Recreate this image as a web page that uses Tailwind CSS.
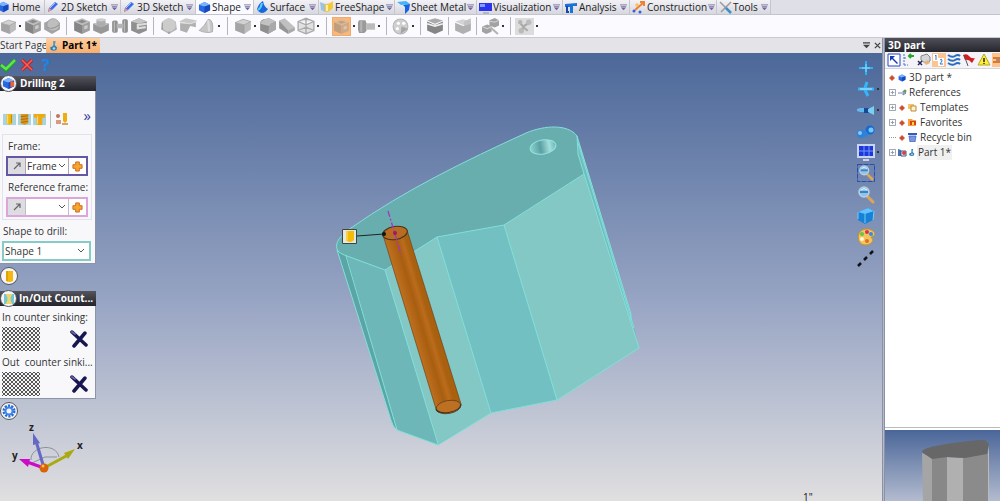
<!DOCTYPE html>
<html lang="en">
<head>
    <meta charset="UTF-8">
    <meta name="viewport" content="width=device-width, initial-scale=1.0">
    <title>Part 1 - 3D part</title>
    <script src="https://cdn.jsdelivr.net/npm/@tailwindcss/browser@4"></script>
</head>

<body class="h-screen flex flex-col overflow-hidden bg-[#e3e3e8] font-['Open_Sans',sans-serif] text-[10px] leading-[15px] text-[#333]">

<!-- Shared icon shapes -->
<svg class="absolute size-0">
    <symbol id="box" viewBox="0 0 16 16">
        <path d="M1 5 8 2 15 4 9 7z" fill="#d2d2d2"/><path d="M1 5 9 7V15L1 12z" fill="#a4a4a4"/><path d="M9 7 15 4V11L9 15z" fill="#bcbcbc"/>
        <path d="M1 5 8 2 15 4 9 7zM9 7V15" fill="none" stroke="#989898" stroke-width=".6"/>
    </symbol>
    <symbol id="dark-box" viewBox="0 0 16 16">
        <path d="M1 4 8 1 15 4 8 7z" fill="#bbb"/><path d="M1 4 8 7V15L1 12z" fill="#858585"/><path d="M8 7 15 4V12L8 15z" fill="#9e9e9e"/>
        <path d="M4 4 8 2.500 12 4 8 5.500z" fill="#8a8a8a"/><path d="M10 8 13 7V10L10 11z" fill="#ccc"/>
    </symbol>
    <symbol id="sphere" viewBox="0 0 16 16">
        <path d="M1 5 8 2 15 5V11L8 15 1 11z" fill="#a5a5a5"/><circle cx="9" cy="7" r="5.500" fill="#bebebe" stroke="#999" stroke-width=".7"/><path d="M4 9Q9 12 14 7" fill="none" stroke="#989898"/>
    </symbol>
    <symbol id="boss" viewBox="0 0 16 16">
        <path d="M1 6 8 4 15 6V12L8 15 1 12z" fill="#989898"/><path d="M1 6 8 9 15 6 8 4z" fill="#c4c4c4"/><path d="M4 2H12V8Q8 10 4 8z" fill="#adadad"/><ellipse cx="8" cy="2.500" rx="4" ry="1.500" fill="#ccc"/>
    </symbol>
    <symbol id="spool" viewBox="0 0 16 16">
        <rect x="1" y="3" width="5" height="11" rx="1.500" fill="#909090"/><rect x="10" y="2" width="5" height="12" rx="1.500" fill="#909090"/><rect x="5" y="6" width="6" height="4" fill="#b5b5b5"/><path d="M3 4V13M12 3V13" stroke="#bbb"/>
    </symbol>
    <symbol id="slot" viewBox="0 0 16 16">
        <path d="M1 4 8 1 15 4V12L8 15 1 12z" fill="#8f8f8f"/><path d="M1 4 8 1 15 4 8 6z" fill="#c5c5c5"/><path d="M15 6 7 7V10L14 9" fill="none" stroke="#ddd" stroke-width="2"/>
    </symbol>
    <symbol id="round-edge" viewBox="0 0 16 16">
        <path d="M1 6Q1 3 4 2L9 1 15 4V11L8 15 1 12z" fill="#8f8f8f"/><path d="M1 6Q2 3 5 2L9 1 15 4Q11 5 9 8z" fill="#c2c2c2"/><path d="M9 8Q11 5 15 4V11L8 15z" fill="#aaa"/>
    </symbol>
    <symbol id="round-box" viewBox="0 0 16 16">
        <path d="M2 4 8 1 14 4 15 11 8 15 1 11z" fill="#b4b4b4"/><circle cx="8" cy="7" r="6" fill="#ccc"/><path d="M8 13V15M2 5V11" stroke="#999"/>
    </symbol>
    <symbol id="sheet" viewBox="0 0 16 16">
        <path d="M0 4 6 1 16 3 10 6z" fill="#c9c9c9"/><path d="M1 5 10 6 15 4V9L10 8 7 14 1 12z" fill="#b0b0b0"/><path d="M1 5 10 6 16 4" fill="none" stroke="#ddd"/>
    </symbol>
    <symbol id="cone" viewBox="0 0 16 16">
        <path d="M1 12Q6 8 9 2Q14 2 13 13Q8 15 1 12z" fill="#c6c6c6" stroke="#a4a4a4" stroke-width=".7"/><path d="M9 3 10 13" stroke="#ddd" stroke-width="2"/>
    </symbol>
    <symbol id="wedge" viewBox="0 0 16 16">
        <path d="M1 3 6 1 15 9 9 13z" fill="#c0c0c0"/><path d="M1 3 9 12V15L1 10z" fill="#949494"/><path d="M9 12 15 9V12L9 15z" fill="#aaa"/>
    </symbol>
    <symbol id="wire" viewBox="0 0 16 16">
        <path d="M1 4 8 1 15 4V12L8 15 1 12zM1 4 8 7 15 4M8 7V15M1 12 8 9 15 12M8 1V9" fill="#e1e1e1" stroke="#aaa" stroke-width="1.200"/>
    </symbol>
    <symbol id="bolt" viewBox="0 0 16 16">
        <path d="M1 2H7L8 5V12L6 14H1L0 11V4z" fill="#9a9a9a"/><path d="M8 5H16V11H8z" fill="#bbb"/><path d="M3 3V13" stroke="#b4b4b4" stroke-width="2"/>
    </symbol>
    <symbol id="wheel" viewBox="0 0 16 16">
        <circle cx="8" cy="8" r="7" fill="#cfcfcf" stroke="#b5b5b5"/><circle cx="6" cy="5" r="1.500" fill="#fff"/><circle cx="11" cy="5" r="1.500" fill="#fff"/><circle cx="5" cy="10" r="1.500" fill="#fff"/><path d="M8 15 9 8 15 10" fill="#a5a5a5"/>
    </symbol>
    <symbol id="gauges" viewBox="0 0 16 16">
        <path d="M7 2 12 0 16 2V7L12 9 7 7zM0 8 5 6 9 8V13L4 15 0 13z" fill="#a2a2a2"/><path d="M8 9 15 15" stroke="#b4b4b4" stroke-width="2"/><path d="M0 8 5 10 9 8M7 3 12 4 16 2" stroke="#d5d5d5" fill="none"/>
    </symbol>
    <symbol id="part" viewBox="0 0 10 12">
        <path d="M4 0H7L6 5 9 8 8 11 5 12 1 11 0 8 4 6z" fill="#2f82b8"/><circle cx="5" cy="9" r="1.500" fill="#b8ddee"/><path d="M5 1V5" stroke="#86c1df"/>
    </symbol>
    <symbol id="menu" viewBox="0 0 8 8"><path d="M0 1H8M1 3H7" stroke="#7b719e"/><path d="M1 4H7L4 7z" fill="#7064a0"/></symbol>
    <symbol id="chev" viewBox="0 0 8 8"><path d="M1 2 4 5 7 2" fill="none" stroke="#555"/></symbol>
    <symbol id="dot" viewBox="0 0 6 6"><rect x="2" y="2" width="2" height="2" fill="#333"/></symbol>
    <symbol id="pencil" viewBox="0 0 12 12"><path d="M1 11 2 7 8 1 11 3 5 9z" fill="#3b6dec"/><path d="M3 7 8 2" stroke="#a8c6ff"/><path d="M1 11 2 7 5 9z" fill="#ec9286"/></symbol>
    <symbol id="bluebox" viewBox="0 0 14 14"><path d="M1 4 7 1 13 4V10L7 13 1 10z" fill="#2869e2"/><path d="M1 4 7 1 13 4 7 6z" fill="#79b5fb"/><path d="M7 6 13 4V10L7 13z" fill="#1748be"/></symbol>
    <symbol id="plus" viewBox="0 0 12 12"><path d="M4 1H8V4H11V8H8V11H4V8H1V4H4z" fill="#f7a52b" stroke="#c9661d"/></symbol>
    <symbol id="drill" viewBox="0 0 14 14"><path d="M0 1H14V13H0z" fill="#a9d4df"/><path d="M4 1H10V11L7 13 4 11z" fill="#f5b90e"/><path d="M5 2V11" stroke="#ffe36b"/><path d="M9 2V11" stroke="#c48403"/></symbol>
    <symbol id="axis" viewBox="0 0 12 12"><path d="M3 9 9 3M5 3H9V7" fill="none" stroke="#666" stroke-width="1.200"/></symbol>
    <symbol id="cross" viewBox="0 0 18 18"><path d="M2 2 16 15M15 3 4 16" stroke="#171651" stroke-width="3.500" stroke-linecap="round"/><path d="M2 2 5 4" stroke="#6466a3" stroke-width="2" stroke-linecap="round"/></symbol>
    <symbol id="gem" viewBox="0 0 8 8"><path d="M4 0 8 4 4 8 0 4z" fill="#d9593a"/><path d="M4 2V6M2 4H6" stroke="#b5482e"/></symbol>
    <symbol id="expand" viewBox="0 0 8 8"><path d="M.5.500H7.500V7.500H.5zM2 4H6M4 2V6" fill="#fff" stroke="#8e96a5"/></symbol>
    <symbol id="lens" viewBox="0 0 18 18"><path d="M10 10 16 16" stroke="#dda652" stroke-width="3" stroke-linecap="round"/><circle cx="7" cy="6" r="5" fill="#8bc4ed" stroke="#b9cfdf" stroke-width="1.500"/><path d="M3 6H11" stroke="#3f80be" stroke-width="2"/><path d="M4 4Q7 1 10 4" stroke="#e9f8ff" fill="none"/></symbol>
    <pattern id="hatch" width="4" height="4" patternUnits="userSpaceOnUse"><rect width="4" height="4" fill="#f4f4f4"/><path d="M0 0 4 4M4 0 0 4" stroke="#444" stroke-width=".9"/></pattern>
</svg>

<!-- Ribbon tabs -->
<nav class="h-[15px] shrink-0 flex bg-[#dfdfe7] text-[#222] border-b border-[#c4c4cc] whitespace-nowrap">
    <button class="w-[45px] flex items-center gap-[2px] bg-linear-to-b from-[#f2f2f6] to-[#d7d7df] border-r border-[#c6c6cf]"><svg class="w-[10px] h-3 shrink-0" viewBox="4 0 10 14"><use href="#bluebox" width="14" height="14"/></svg>Home</button>
    <button class="w-[76px] flex items-center gap-[2px] px-[2px] bg-linear-to-b from-[#f2f2f6] to-[#d7d7df] border-r border-[#c6c6cf]"><svg class="size-3 shrink-0"><use href="#pencil"/></svg>2D Sketch<svg class="size-[7px] ml-auto shrink-0"><use href="#menu"/></svg></button>
    <button class="w-[75px] flex items-center gap-[2px] px-[2px] bg-linear-to-b from-[#f2f2f6] to-[#d7d7df] border-r border-[#c6c6cf]"><svg class="size-3 shrink-0"><use href="#pencil"/></svg>3D Sketch<svg class="size-[7px] ml-auto shrink-0"><use href="#menu"/></svg></button>
    <button class="w-[58px] flex items-center gap-[1px] px-[2px] bg-[#fbfbff] border-r border-[#c6c6cf]"><svg class="size-[13px] shrink-0"><use href="#bluebox"/></svg>Shape<svg class="size-[7px] ml-auto shrink-0"><use href="#menu"/></svg></button>
    <button class="w-[65px] flex items-center gap-[2px] px-[2px] bg-linear-to-b from-[#f2f2f6] to-[#d7d7df] border-r border-[#c6c6cf]"><svg class="size-3 shrink-0" viewBox="0 0 12 12"><path d="M1 8Q3 2 7 0Q8 6 12 8Q9 12 6 12Q2 11 1 8z" fill="#1867dc"/><path d="M6 2Q5 7 2 9" stroke="#62cafa" fill="none" stroke-width="2"/></svg>Surface<svg class="size-[7px] ml-auto shrink-0"><use href="#menu"/></svg></button>
    <button class="w-[76px] flex items-center gap-[1px] px-[1px] bg-linear-to-b from-[#f2f2f6] to-[#d7d7df] border-r border-[#c6c6cf]"><svg class="size-[14px] shrink-0" viewBox="0 0 14 14"><path d="M0 2 5 4 5 12 1 10z" fill="#9bc3e1"/><path d="M5 4Q10 4 13 1V8Q9 13 5 12z" fill="#f3c83b"/><path d="M7 5V11" stroke="#fff0a6" stroke-width="2"/></svg>FreeShape<svg class="size-[7px] ml-auto shrink-0"><use href="#menu"/></svg></button>
    <button class="w-[82px] flex items-center gap-[1px] px-[2px] bg-linear-to-b from-[#f2f2f6] to-[#d7d7df] border-r border-[#c6c6cf]"><svg class="size-[13px] shrink-0" viewBox="0 0 13 13"><path d="M0 1 9 0 13 3 4 4z" fill="#44b4fc"/><path d="M6 4 13 3 12 9 8 13V6z" fill="#1265e2"/></svg>Sheet Metal<svg class="size-[7px] ml-auto shrink-0"><use href="#menu"/></svg></button>
    <button class="w-[86px] flex items-center gap-[1px] px-[2px] bg-linear-to-b from-[#f2f2f6] to-[#d7d7df] border-r border-[#c6c6cf]"><svg class="size-[13px] shrink-0" viewBox="0 0 13 13"><path d="M0 2H13V10H0z" fill="#2934ef"/><path d="M1 3H6V6H1z" fill="#819dff"/><path d="M4 12H10" stroke="#b2b6c9" stroke-width="2"/></svg>Visualization<svg class="size-[7px] ml-auto shrink-0"><use href="#menu"/></svg></button>
    <button class="w-[67px] flex items-center gap-[1px] px-[2px] bg-linear-to-b from-[#f2f2f6] to-[#d7d7df] border-r border-[#c6c6cf]"><svg class="size-[13px] shrink-0" viewBox="0 0 13 13"><path d="M0 3 12 2V5H8V12H5V6H0z" fill="#1873da"/><path d="M2 5V11H4" stroke="#1649a9" stroke-width="2" fill="none"/></svg>Analysis<svg class="size-[7px] ml-auto shrink-0"><use href="#menu"/></svg></button>
    <button class="w-[87px] flex items-center gap-[1px] px-[2px] bg-linear-to-b from-[#f2f2f6] to-[#d7d7df] border-r border-[#c6c6cf]"><svg class="size-[14px] shrink-0" viewBox="0 0 14 14"><path d="M3 10 11 3M8 2H12V6" stroke="#ef8034" stroke-width="2" fill="none"/><circle cx="2" cy="11" r="1.500" fill="#315eea"/><circle cx="8" cy="12" r="1.500" fill="#315eea"/><path d="M5 3V7M3 5H7" stroke="#f4bd37"/></svg>Construction<svg class="size-[7px] ml-auto shrink-0"><use href="#menu"/></svg></button>
    <button class="w-[54px] flex items-center gap-[1px] px-[2px] bg-linear-to-b from-[#f2f2f6] to-[#d7d7df] border-r border-[#c6c6cf]"><svg class="size-[13px] shrink-0" viewBox="0 0 13 13"><path d="M6 6 12 12" stroke="#3a90c8" stroke-width="2.500"/><path d="M1 1 6 6M12 1 2 11" stroke="#9c9c9c" stroke-width="1.500"/></svg>Tools<svg class="size-[7px] ml-auto shrink-0"><use href="#menu"/></svg></button>
</nav>

<!-- Shape tools -->
<div class="h-[23px] shrink-0 flex items-center bg-[#fbfaff] border-b border-[#c9c9d0]">
    <button aria-label="Extrude" class="w-[17px] flex"><svg class="size-[17px] shrink-0"><use href="#box"/></svg></button><svg class="size-[6px]"><use href="#dot"/></svg>
    <button aria-label="Revolve" class="w-[19px] flex justify-center"><svg class="size-[18px]"><use href="#dark-box"/></svg></button>
    <button aria-label="Pipe" class="w-[19px] flex justify-center"><svg class="size-[18px]"><use href="#sphere"/></svg></button>
    <i class="w-px h-[18px] mx-[5px] bg-[#b5b5bb]"></i>
    <button aria-label="Pocket" class="w-[19px] flex justify-center"><svg class="size-[18px]"><use href="#dark-box"/></svg></button>
    <button aria-label="Boss" class="w-[19px] flex justify-center"><svg class="size-[18px]"><use href="#boss"/></svg></button>
    <button aria-label="Groove" class="w-[19px] flex justify-center"><svg class="size-[18px]"><use href="#spool"/></svg></button>
    <button aria-label="Slot" class="w-[19px] flex justify-center"><svg class="size-[18px]"><use href="#slot"/></svg></button>
    <i class="w-px h-[18px] mx-[5px] bg-[#b5b5bb]"></i>
    <button aria-label="Sphere" class="w-[19px] flex justify-center"><svg class="size-[18px]"><use href="#round-box"/></svg></button>
    <button aria-label="Sheet" class="w-[19px] flex justify-center"><svg class="size-[18px]"><use href="#sheet"/></svg></button>
    <button aria-label="Loft" class="w-[19px] flex justify-center"><svg class="size-[18px]"><use href="#cone"/></svg></button><svg class="size-[6px]"><use href="#dot"/></svg>
    <i class="w-px h-[18px] mx-[5px] bg-[#b5b5bb]"></i>
    <button aria-label="Fillet" class="w-[19px] flex justify-center"><svg class="size-[18px]"><use href="#box"/></svg></button><svg class="size-[6px]"><use href="#dot"/></svg>
    <button aria-label="Chamfer" class="w-[19px] flex justify-center"><svg class="size-[18px]"><use href="#round-edge"/></svg></button>
    <button aria-label="Draft" class="w-[19px] flex justify-center"><svg class="size-[18px]"><use href="#wedge"/></svg></button>
    <button aria-label="Shell" class="w-[19px] flex justify-center"><svg class="size-[18px]"><use href="#wire"/></svg></button><svg class="size-[6px]"><use href="#dot"/></svg>
    <i class="w-px h-[18px] mx-[5px] bg-[#b5b5bb]"></i>
    <button aria-label="Drilling" class="w-[19px] h-[19px] flex justify-center items-center bg-[#f9b878] border border-[#eeaa70]"><svg class="size-[17px] opacity-50"><use href="#dark-box"/></svg></button><svg class="size-[6px]"><use href="#dot"/></svg>
    <button aria-label="Bolt" class="w-[19px] flex justify-center"><svg class="size-[17px]"><use href="#bolt"/></svg></button><svg class="size-[6px]"><use href="#dot"/></svg>
    <i class="w-px h-[18px] mx-1 bg-[#b5b5bb]"></i>
    <button aria-label="Pattern" class="w-[19px] flex justify-center"><svg class="size-[17px]"><use href="#wheel"/></svg></button><svg class="size-[6px]"><use href="#dot"/></svg>
    <i class="w-px h-[18px] mx-1 bg-[#b5b5bb]"></i>
    <button aria-label="Trim" class="w-[19px] flex justify-center"><svg class="size-[18px]" viewBox="0 0 16 16"><path d="M1 4 8 7 15 4V12L8 15 1 12z" fill="#858585"/><path d="M1 3 8 1 15 3 8 6z" fill="#aaa"/><path d="M1 6 8 8 15 6" stroke="#f0f0f0" stroke-width="1.500" fill="none"/></svg></button>
    <i class="w-px h-[18px] mx-1 bg-[#b5b5bb]"></i>
    <button aria-label="Split" class="w-[19px] flex justify-center"><svg class="size-[18px]" viewBox="0 0 16 16"><path d="M1 5 8 8 15 5V12L8 15 1 12z" fill="#b0b0b0"/><path d="M1 4 8 2 15 4 8 7z" fill="#d3d3d3"/><path d="M9 4 15 1V6L9 8z" fill="#c3c3c3"/></svg></button>
    <i class="w-px h-[18px] mx-1 bg-[#b5b5bb]"></i>
    <button aria-label="Local operations" class="w-[19px] flex justify-center"><svg class="size-[17px]"><use href="#gauges"/></svg></button><svg class="size-[6px]"><use href="#dot"/></svg>
    <i class="w-px h-[18px] mx-1 bg-[#b5b5bb]"></i>
    <button aria-label="Process" class="w-[19px] h-[17px] flex justify-center items-center bg-[#dcdcdc]"><svg class="size-[15px]" viewBox="0 0 14 14"><path d="M2 3 6 7 12 3M6 7 4 12M5 7 10 11" fill="none" stroke="#aaa" stroke-width="2"/><circle cx="11" cy="3" r="2.500" fill="#bbb"/><circle cx="3" cy="3" r="2" fill="#b4b4b4"/><circle cx="4" cy="11" r="2.500" fill="#b9b9b9"/></svg></button><svg class="size-[6px]"><use href="#dot"/></svg>
</div>

<div class="flex-1 min-h-0 flex">
    <main class="flex-1 min-w-0 flex flex-col">
        <!-- Document tabs -->
        <div class="h-[15px] shrink-0 flex items-stretch">
            <button class="w-[46px] shrink-0 flex bg-[#f1f1f4] whitespace-nowrap">Start Page</button>
            <button class="w-[54px] shrink-0 flex items-center gap-1 pl-1 bg-linear-to-b from-[#fdd0a4] to-[#f7ae6c] font-bold text-black whitespace-nowrap"><svg class="w-[8px] h-3 shrink-0"><use href="#part"/></svg>Part 1*</button>
            <div class="ml-auto flex items-center gap-1 pr-px">
                <button aria-label="Window list"><svg class="size-[7px]" viewBox="0 0 8 8"><path d="M0 1H8" stroke="#444" stroke-width="1.500"/><path d="M0 3H8L4 7z" fill="#444"/></svg></button>
                <button aria-label="Close document"><svg class="size-[7px]" viewBox="0 0 8 8"><path d="M1 1 7 7M7 1 1 7" stroke="#444" stroke-width="1.500"/></svg></button>
            </div>
        </div>

        <!-- Graphics area -->
        <div class="relative flex-1 min-h-0 flex justify-between overflow-hidden bg-linear-to-b from-[#4c6899] via-[#97a4c3] via-55% to-[#e0dfe0]">
            <svg class="absolute inset-0 w-full h-full" viewBox="0 53 882 448" stroke-linejoin="round">
                <defs>
                    <linearGradient id="rod" x1="395" y1="300" x2="422" y2="292" gradientUnits="userSpaceOnUse"><stop offset="0" stop-color="#b0640f"/><stop offset=".25" stop-color="#c17120"/><stop offset=".65" stop-color="#a85e10"/><stop offset=".85" stop-color="#bb6c1c"/><stop offset="1" stop-color="#a9600f"/></linearGradient>
                    <linearGradient id="bore"><stop offset="0" stop-color="#8bd3d1"/><stop offset=".4" stop-color="#5b9fa3"/><stop offset=".75" stop-color="#a3dfdc"/><stop offset="1" stop-color="#6bb5b5"/></linearGradient>
                </defs>
                <path d="M337 250 391 420Q393 427 397 430L438 445 491 413 557 400 639 348 631 314 577 135 504 180z" fill="#6fbdbc"/>
                <path d="M337 250 391 420Q393 427 397 430L347 256z" fill="#5ba5a6"/>
                <path d="M347 256 385 270 438 444 397 430z" fill="#6db7b9"/>
                <path d="M385 270 437 237 491 413 438 444z" fill="#84c8c6"/>
                <path d="M437 237 504 225 557 400 491 413z" fill="#72c0c1"/>
                <path d="M504 225 584 174 639 348 557 400z" fill="#84c8c6"/>
                <path d="M337 249C335 242 340 236 351 228C405 190 465 161 526 133C545 125 568 124 577 136L578 154 584 174 504 225 437 237 385 270 347 256Q338 253 337 249z" fill="#68aeaf" stroke="#83dfdb"/>
                <path d="M337 250 391 420Q393 427 397 430L438 445 491 413 557 400 639 348M346 256 397 430M385 270 438 444M437 237 491 413M504 225 557 400M577 136 631 314V320M584 174 639 348M578 143 634 328" fill="none" stroke="#83dfdb"/>
                <ellipse cx="543" cy="147" rx="13" ry="7" transform="rotate(-10 543 147)" fill="url(#bore)" stroke="#93e5e0"/>
                <path d="M383 235 436 409C438 416 460 413 461 404L407 230z" fill="url(#rod)"/>
                <path d="M383 235 436 409M407 230 461 404" stroke="#704416" stroke-width=".7"/>
                <ellipse cx="395" cy="233" rx="12.500" ry="6.500" transform="rotate(-10 395 233)" fill="#b86c21" stroke="#46331e"/>
                <ellipse cx="448.500" cy="407" rx="12.500" ry="6.500" transform="rotate(-10 448.500 407)" fill="#bd7022" stroke="#62401b" stroke-width=".8"/>
                <path d="M436 409C438 416 460 413 461 404" fill="none" stroke="#3b352c" stroke-width="1.200"/>
                <path d="M388 211 401 254" stroke="#a834c0" stroke-width="1.300" stroke-dasharray="6 2 2 2"/>
                <circle cx="395" cy="233" r="2" fill="#a3185e"/>
                <path d="M357 236 384 234" stroke="#222"/><circle cx="384" cy="234" r="2" fill="#111"/>
                <rect x="342.500" y="229.500" width="14" height="14" fill="#e3e9dc" stroke="#3c4544"/>
                <path d="M346 231H354V240Q350 244 346 240z" fill="#f4bb09"/><path d="M347 231V240" stroke="#ffe47b"/>
                <text x="803" y="501" font-size="10" fill="#111">1"</text>
            </svg>

            <!-- Drilling dialog -->
            <div class="relative w-24 flex flex-col">
                <div class="h-[23px] shrink-0 flex items-center gap-1">
                    <button aria-label="OK"><svg class="size-4" viewBox="0 0 16 16"><path d="M1 8 6 13 15 3" fill="none" stroke="#24962c" stroke-width="4"/><path d="M1 8 6 12 15 3" fill="none" stroke="#59e947" stroke-width="2.500"/></svg></button>
                    <button aria-label="Cancel"><svg class="size-[14px]" viewBox="0 0 14 14"><path d="M2 2 12 12M12 2 2 12" stroke="#be2224" stroke-width="3.500"/><path d="M2 2 12 12M12 2 2 12" stroke="#f3625d" stroke-width="1.500"/></svg></button>
                    <button aria-label="Help" class="pl-1 text-[16px] leading-4 font-bold text-[#1687e9]">?</button>
                </div>
                <section>
                    <h2 class="h-[15px] flex items-center bg-linear-to-b from-[#55555e] to-[#24242c] text-white font-bold whitespace-nowrap"><span class="size-[17px] mr-[3px] -my-1 rounded-full bg-[#f4f4f8] border border-[#555] flex items-center justify-center"><svg class="size-[13px]" viewBox="0 0 14 14"><use href="#bluebox" width="14" height="14"/><path d="M9 4 13 5V10L9 11z" fill="#ed6339"/></svg></span>Drilling 2</h2>
                    <div class="bg-[#f8f8fb] border-b border-r border-[#8b94a8] px-[2px] pb-[2px] pt-[19px]">
                        <div class="flex items-center h-[18px] gap-[2px]">
                            <button aria-label="Simple hole" class="pl-px"><svg class="size-[13px]"><use href="#drill"/></svg></button>
                            <button aria-label="Threaded hole"><svg class="size-[13px]" viewBox="0 0 14 14"><path d="M0 1H14V13H0z" fill="#a9d4df"/><path d="M3 1H11V11L7 13 3 11z" fill="#d9971e"/><path d="M3 4 11 3M3 7 11 6M3 10 11 9" stroke="#a96a18"/></svg></button>
                            <button aria-label="Counterbore"><svg class="size-[13px]" viewBox="0 0 14 14"><path d="M0 1H14V13H0z" fill="#a9d4df"/><path d="M1 1H13V5H10V13H4V5H1z" fill="#efa912"/><path d="M5 3V12" stroke="#ffe06a"/></svg></button>
                            <i class="w-px h-[17px] mx-[2px] bg-[#bbb]"></i>
                            <button aria-label="Hole options"><svg class="size-[14px]" viewBox="0 0 14 14"><path d="M8 1H12V9L10 11 8 9z" fill="#f0ad10"/><circle cx="3" cy="4" r="2" fill="#bb7661"/><path d="M1 8H6V12H1z" fill="#d99a83"/><path d="M7 12H13" stroke="#c98c2f" stroke-width="1.500"/></svg></button>
                            <button aria-label="More" class="ml-auto mb-2 pr-[2px] text-[15px] leading-3 text-[#353b9b]">»</button>
                        </div>
                        <div class="mt-[6px] mr-px border border-[#e2e2ea] px-[5px] pt-1 pb-[2px]">
                            <label for="frame" class="block">Frame:</label>
                            <div class="-mx-[2px] mt-[2px] h-5 flex items-stretch border-2 border-[#6657a4] bg-white">
                                <button aria-label="Pick frame" class="w-[17px] shrink-0 flex items-center justify-center bg-[#dcdce1]"><svg class="size-3"><use href="#axis"/></svg></button>
                                <div class="relative flex-1 min-w-0 border-x border-[#aaa5b8]">
                                    <select id="frame" class="appearance-none w-full h-full pl-px"><option>Frame</option></select>
                                    <svg class="absolute right-[2px] top-1 size-2 pointer-events-none"><use href="#chev"/></svg>
                                </div>
                                <button aria-label="Create frame" class="w-[17px] shrink-0 flex items-center justify-center"><svg class="size-[11px]" viewBox="0 0 12 12"><use href="#plus"/></svg></button>
                            </div>
                            <label for="refFrame" class="block mt-1 whitespace-nowrap">Reference frame:</label>
                            <div class="-mx-[2px] mt-[2px] h-5 flex items-stretch border-2 border-[#dba6dc] bg-white">
                                <button aria-label="Pick reference frame" class="w-[17px] shrink-0 flex items-center justify-center bg-[#dcdce1]"><svg class="size-3"><use href="#axis"/></svg></button>
                                <div class="relative flex-1 min-w-0 border-x border-[#c5b9cc]">
                                    <select id="refFrame" class="appearance-none w-full h-full pl-px"><option></option></select>
                                    <svg class="absolute right-[2px] top-1 size-2 pointer-events-none"><use href="#chev"/></svg>
                                </div>
                                <button aria-label="Create reference frame" class="w-[17px] shrink-0 flex items-center justify-center"><svg class="size-[11px]" viewBox="0 0 12 12"><use href="#plus"/></svg></button>
                            </div>
                        </div>
                        <label for="shape" class="block mt-1 pl-px">Shape to drill:</label>
                        <div class="relative mt-[2px] mr-[2px] h-5 border-2 border-[#86cbc8] bg-white">
                            <select id="shape" class="appearance-none w-full h-full pl-px"><option>Shape 1</option></select>
                            <svg class="absolute right-1 top-1 size-2 pointer-events-none"><use href="#chev"/></svg>
                        </div>
                    </div>
                </section>
                <button aria-label="Hole" class="mt-[3px] size-[18px] shrink-0 rounded-full bg-[#f6f6f8] border border-[#555] flex items-center justify-center"><svg class="w-[7px] h-3" viewBox="0 0 7 12"><path d="M0 1H7V11Q3 13 0 11z" fill="#f5b90e"/><path d="M1 1V11" stroke="#c88b08"/></svg></button>
                <section class="mt-[6px]">
                    <h2 class="h-[15px] flex items-center bg-linear-to-b from-[#55555e] to-[#24242c] text-white font-bold whitespace-nowrap"><span class="size-[17px] mr-[2px] -my-1 shrink-0 rounded-full bg-[#f4f4f8] border border-[#555] flex items-center justify-center"><svg class="size-[10px]" viewBox="0 0 12 12"><path d="M0 0H12V12H0z" fill="#72c9d3"/><path d="M2 0H10L8 4V8L10 12H2L4 8V4z" fill="#f2d36c"/></svg></span>In/Out Count...</h2>
                    <div class="bg-[#f8f8fb] border-b border-r border-[#8b94a8] px-[2px] pt-1 pb-[2px]">
                        <p class="whitespace-nowrap">In counter sinking:</p>
                        <div class="flex items-center justify-between h-[25px] mt-[1px] pr-[5px]">
                            <button aria-label="In counter sinking preview"><svg class="w-[38px] h-6"><rect width="38" height="24" fill="url(#hatch)"/></svg></button>
                            <button aria-label="Clear in counter sinking"><svg class="size-[18px]"><use href="#cross"/></svg></button>
                        </div>
                        <p class="mt-[4px] whitespace-pre">Out  counter sinki...</p>
                        <div class="flex items-center justify-between h-[25px] mt-[1px] pr-[5px]">
                            <button aria-label="Out counter sinking preview"><svg class="w-[38px] h-6"><rect width="38" height="24" fill="url(#hatch)"/></svg></button>
                            <button aria-label="Clear out counter sinking"><svg class="size-[18px]"><use href="#cross"/></svg></button>
                        </div>
                    </div>
                </section>
                <button aria-label="Settings" class="mt-[3px] size-[18px] shrink-0 rounded-full bg-[#f6f6f8] border border-[#555] flex items-center justify-center"><svg class="size-[14px]" viewBox="0 0 14 14"><circle cx="7" cy="7" r="5" fill="none" stroke="#2468d8" stroke-width="3" stroke-dasharray="2 1.140"/><circle cx="7" cy="7" r="3.500" fill="none" stroke="#3f83ee" stroke-width="2"/></svg></button>
                <!-- Axis triad -->
                <svg class="w-24 h-14 shrink-0" viewBox="0 420 96 56" font-size="10" font-weight="bold">
                    <path d="M31 460C30 446 56 442 59 457M32 463 45 457 57 457" fill="none" stroke="#8b919c"/>
                    <path d="M44 468 36 441" stroke="#6668c6" stroke-width="3"/><path d="M33 433 40 443 33 445z" fill="#6668c6"/>
                    <path d="M44 468 68 455" stroke="#aaa90f" stroke-width="3"/><path d="M75 449 64 453 68 459z" fill="#aaa90f"/>
                    <path d="M44 468 27 462" stroke="#cb0bc9" stroke-width="3"/><path d="M19 459 30 459 28 467z" fill="#cb0bc9"/>
                    <circle cx="44" cy="468" r="4.500" fill="#d66507"/><circle cx="43" cy="466" r="1.500" fill="#ffbd65"/>
                    <text x="29" y="431" fill="#222">z</text><text x="77" y="449" fill="#222">x</text><text x="12" y="459" fill="#222">y</text>
                </svg>
            </div>

            <!-- View tools -->
            <div class="relative w-[25px] flex flex-col items-start pt-[6px] gap-[3px]">
                <button aria-label="Fit view"><svg class="size-[18px]" viewBox="0 0 18 18"><path d="M9 2V16M2 9H16" stroke="#2eb0f7" stroke-width="2"/><path d="M9 5V13M5 9H13" stroke="#7ce1ff"/></svg></button>
                <button aria-label="View direction" class="flex items-center"><svg class="size-[18px]" viewBox="0 0 18 18"><path d="M1 9H17M10 2 8 8M8 10 11 16" stroke="#35b5fa" stroke-width="3"/><path d="M3 9H15" stroke="#b7efff"/></svg><svg class="size-[6px]"><use href="#dot"/></svg></button>
                <button aria-label="Camera" class="flex items-center"><svg class="size-[18px]" viewBox="0 0 18 18"><path d="M0 8 3 7H8V11H3L0 10z" fill="#63b8ef"/><path d="M7 7H12V12H7z" fill="#174a93"/><path d="M11 8 17 5V14L11 11z" fill="#7acff7"/></svg><svg class="size-[6px]"><use href="#dot"/></svg></button>
                <button aria-label="View entities"><svg class="size-[18px]" viewBox="0 0 18 18"><circle cx="4" cy="12" r="4" fill="#2e81db"/><circle cx="13" cy="8" r="4.500" fill="#176bd0"/><path d="M7 8 11 11 10 15 6 14z" fill="#2a83e0"/><circle cx="3" cy="11" r="2" fill="#84caf9"/><circle cx="14" cy="8" r="2.500" fill="#75c7fa"/></svg></button>
                <button aria-label="Layout" class="flex items-center"><svg class="size-[18px]" viewBox="0 0 18 18"><path d="M0 1H18V15H0z" fill="#c7d5f5"/><path d="M2 3H16V13H2z" fill="#1f37d8"/><path d="M2 8H16M7 3V13M12 3V13" stroke="#7396ff"/><path d="M6 17H12" stroke="#ccd5e8" stroke-width="2"/></svg><svg class="size-[6px]"><use href="#dot"/></svg></button>
                <button aria-label="Zoom window"><svg class="size-[18px]" viewBox="0 0 18 18"><path d="M.5.500H17.500V17.500H.5z" fill="none" stroke="#294cb2" stroke-dasharray="5 1"/><use href="#lens" x="1" y="1" width="16" height="16"/></svg></button>
                <button aria-label="Zoom" class="mt-px"><svg class="size-[18px]"><use href="#lens"/></svg></button>
                <button aria-label="Render mode"><svg class="size-[18px]" viewBox="0 0 18 18"><path d="M1 5 11 1 17 4 16 13 8 17 1 13z" fill="#1780d7"/><path d="M1 5 11 1 17 4 8 7z" fill="#66c3ff"/><path d="M8 7V16M1 5V12M17 4 16 13" stroke="#73c9fa" fill="none"/></svg></button>
                <button aria-label="Colors"><svg class="size-[18px]" viewBox="0 0 18 18"><path d="M10 1C2 1 0 8 2 13S12 18 15 14 11 10 16 8 15 1 10 1z" fill="#f2c65d" stroke="#c89333"/><circle cx="10" cy="4" r="2" fill="#e32e50"/><circle cx="5" cy="6" r="2" fill="#64c645"/><circle cx="14" cy="6" r="2" fill="#378bd9"/><circle cx="5" cy="11" r="2" fill="#fff6da"/><circle cx="10" cy="13" r="2" fill="#df702b"/></svg></button>
                <button aria-label="Line style"><svg class="size-[18px]" viewBox="0 0 18 18"><path d="M1 17 4 14M7 11 10 8M13 5 16 2" stroke="#111" stroke-width="2.500"/></svg></button>
            </div>
        </div>
    </main>

    <!-- Splitter -->
    <div class="w-[3px] shrink-0 bg-[#b4bac9] border-x border-[#8b92a5]"></div>

    <!-- Entity tree -->
    <aside class="w-[115px] shrink-0 flex flex-col bg-white">
        <h2 class="h-[14px] shrink-0 px-[3px] bg-linear-to-b from-[#50505a] to-[#26262e] text-white font-bold">3D part</h2>
        <div class="h-[17px] shrink-0 flex items-center gap-px pl-[2px] overflow-hidden bg-[#f3f3f8] border-b border-[#d5d5dc]">
            <button aria-label="Select" class="shrink-0"><svg class="size-[14px]" viewBox="0 0 14 14"><path d="M1 1H13V13H1z" fill="#fff" stroke="#2547c7"/><path d="M3 3H8L6 5 11 10 10 11 5 6 3 8z" fill="#1837b2"/></svg></button>
            <button aria-label="Tree mode" class="shrink-0"><svg class="size-[14px]" viewBox="0 0 14 14"><path d="M2 1V13M2 5H5M2 12H6" stroke="#4874c1" stroke-dasharray="2 1"/><path d="M12 3H7M9 1 7 3 9 5" stroke="#27a72a" stroke-width="2" fill="none"/></svg></button>
            <button aria-label="Hide" class="shrink-0"><svg class="size-[14px]" viewBox="0 0 14 14"><path d="M4 3 10 1 13 4V8L8 10 4 7z" fill="#d5d6da" stroke="#888"/><path d="M1 8 5 12M5 8 1 12" stroke="#23285a" stroke-width="1.500"/><path d="M7 9 11 7 13 10 9 12z" fill="#e4b57a"/></svg></button>
            <button aria-label="Order" class="shrink-0 bg-[#fbc490]"><svg class="size-[14px]" viewBox="0 0 14 14"><path d="M1 1H6V8H1zM6 5H12V13H6z" fill="#fff"/><path d="M3 3 4 2V7M8 7Q10 5 10 8L8 11H11" fill="none" stroke="#327cc4"/></svg></button>
            <button aria-label="Layers" class="shrink-0"><svg class="size-[14px]" viewBox="0 0 14 14"><path d="M1 2Q5 5 8 3T13 3M1 6Q5 9 8 7T13 7M1 10Q5 13 8 11T13 11" fill="none" stroke="#2b6cc0" stroke-width="2"/></svg></button>
            <button aria-label="Flag" class="shrink-0"><svg class="size-[14px]" viewBox="0 0 14 14"><path d="M1 2Q5 0 7 3T13 5L10 10Q7 6 3 7z" fill="#d91920"/><path d="M2 2 6 13" stroke="#555"/></svg></button>
            <button aria-label="Warnings" class="shrink-0"><svg class="size-[14px]" viewBox="0 0 14 14"><path d="M7 1 13 12H1z" fill="#ffef32" stroke="#b5a729"/><path d="M7 5V9M7 10V11" stroke="#222" stroke-width="1.500"/></svg></button>
            <button aria-label="Filter" class="shrink-0 bg-[#fbc490]"><svg class="size-[14px]" viewBox="0 0 14 14"><path d="M1 5H14M1 9H14" stroke="#e27823" stroke-width="2"/><path d="M4 7H14" stroke="#3157af"/></svg></button>
        </div>
        <ul class="flex-1 min-h-0 pl-1 pt-px whitespace-nowrap border-b border-[#bbb]">
            <li class="flex items-center gap-[3px]"><svg class="size-[6px]" viewBox="0 0 8 8"><use href="#gem"/></svg><svg class="size-2" viewBox="0 0 14 14"><use href="#bluebox"/></svg>3D part *</li>
            <li class="flex items-center gap-[2px]"><svg class="size-[7px]" viewBox="0 0 8 8"><use href="#expand"/></svg><svg class="size-[9px]" viewBox="0 0 9 9"><path d="M0 5H4M5 3 8 5 5 7z" stroke="#7987a6" fill="#a5bfdd"/><circle cx="7" cy="3" r="1.500" fill="#5ca159"/></svg>References</li>
            <li class="flex items-center gap-[3px]"><svg class="size-[7px]" viewBox="0 0 8 8"><use href="#expand"/></svg><svg class="size-[6px]" viewBox="0 0 8 8"><use href="#gem"/></svg><svg class="size-[9px]" viewBox="0 0 9 9"><path d="M0 1H6V6H0z" fill="#f2c568"/><path d="M3 3H8V8H3z" fill="#fff4cb" stroke="#c38538"/></svg>Templates</li>
            <li class="flex items-center gap-[3px]"><svg class="size-[7px]" viewBox="0 0 8 8"><use href="#expand"/></svg><svg class="size-[6px]" viewBox="0 0 8 8"><use href="#gem"/></svg><svg class="size-[9px]" viewBox="0 0 9 9"><path d="M0 1H4L5 2H8V8H0z" fill="#f3a439"/><path d="M2 3H8V7H2z" fill="#e33b26"/><path d="M5 4V7" stroke="#ffd54a" stroke-width="2"/></svg>Favorites</li>
            <li class="flex items-center gap-[3px]"><i class="w-[7px] border-t border-dotted border-[#999]"></i><svg class="size-[6px]" viewBox="0 0 8 8"><use href="#gem"/></svg><svg class="size-[9px]" viewBox="0 0 9 9"><path d="M0 0H9V2H0z" fill="#355abc"/><path d="M1 3H8L7 9H2z" fill="#7898e3" stroke="#355abc" stroke-width=".7"/></svg>Recycle bin</li>
            <li class="flex items-center gap-[2px]"><svg class="size-[7px]" viewBox="0 0 8 8"><use href="#expand"/></svg><svg class="size-[9px]" viewBox="0 0 9 9"><path d="M0 1 3 2V8H0z" fill="#4670b7"/><path d="M3 3H8V8H3z" fill="#fff" stroke="#3c578c"/><circle cx="6" cy="5" r="2" fill="#d34343"/></svg><svg class="w-[6px] h-[9px]" viewBox="0 0 10 12"><use href="#part"/></svg><span class="px-px bg-[#f0f0f0]">Part 1*</span></li>
        </ul>
        <!-- Preview -->
        <div class="h-[73px] shrink-0 pt-[2px]">
            <svg class="w-full h-full" viewBox="885 430 115 71" preserveAspectRatio="none">
                <defs><linearGradient id="sky" x2="0" y2="1"><stop offset="0" stop-color="#4a6699"/><stop offset="1" stop-color="#b3bbcf"/></linearGradient></defs>
                <path d="M885 430H1000V501H885z" fill="url(#sky)"/>
                <path d="M922 453 932 458V501H923z" fill="#a5a5a5"/><path d="M932 458 947 457V501H932z" fill="#888"/><path d="M947 457 963 458V501H947z" fill="#b0b0b0"/><path d="M963 458 988 453V501H963z" fill="#8b8b8b"/><path d="M988 453 989 443V501H988z" fill="#bbb"/>
                <path d="M922 452Q922 448 941 445Q970 440 985 440L989 444 987 454 965 458 947 457 932 459z" fill="#676767"/>
            </svg>
        </div>
    </aside>
</div>

</body>
</html>
